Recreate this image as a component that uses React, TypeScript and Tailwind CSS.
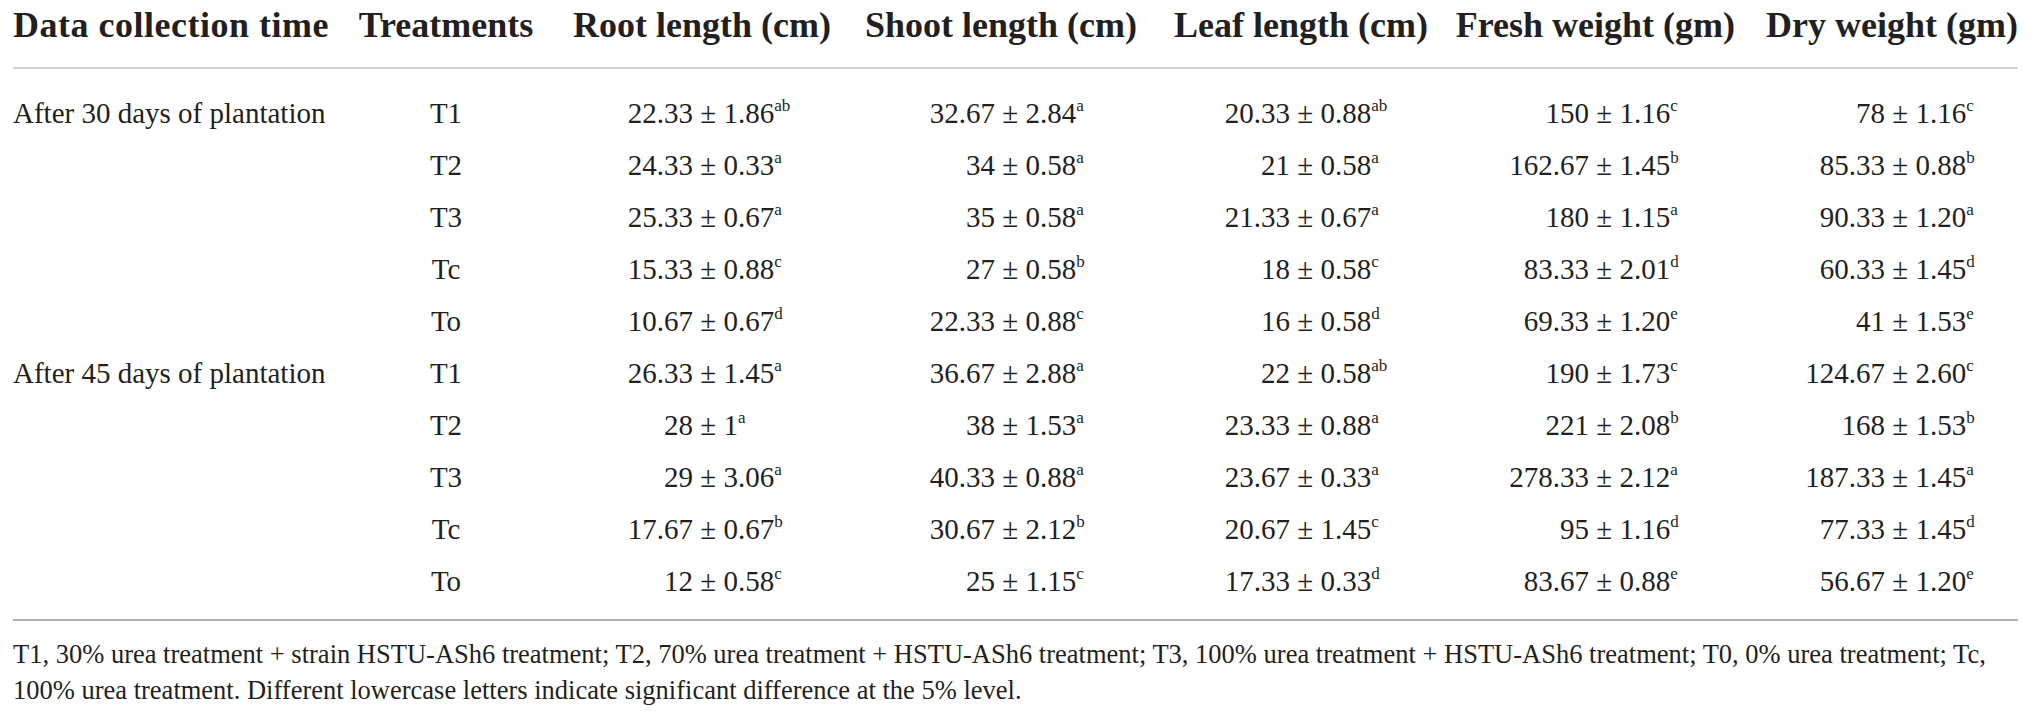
const groups = [
  {
    label: "After 30 days of plantation",
    rows: [
      ["T1", ["22.33", "1.86", "ab"], ["32.67", "2.84", "a"], ["20.33", "0.88", "ab"], ["150", "1.16", "c"], ["78", "1.16", "c"]],
      ["T2", ["24.33", "0.33", "a"], ["34", "0.58", "a"], ["21", "0.58", "a"], ["162.67", "1.45", "b"], ["85.33", "0.88", "b"]],
      ["T3", ["25.33", "0.67", "a"], ["35", "0.58", "a"], ["21.33", "0.67", "a"], ["180", "1.15", "a"], ["90.33", "1.20", "a"]],
      ["Tc", ["15.33", "0.88", "c"], ["27", "0.58", "b"], ["18", "0.58", "c"], ["83.33", "2.01", "d"], ["60.33", "1.45", "d"]],
      ["To", ["10.67", "0.67", "d"], ["22.33", "0.88", "c"], ["16", "0.58", "d"], ["69.33", "1.20", "e"], ["41", "1.53", "e"]],
    ],
  },
  {
    label: "After 45 days of plantation",
    rows: [
      ["T1", ["26.33", "1.45", "a"], ["36.67", "2.88", "a"], ["22", "0.58", "ab"], ["190", "1.73", "c"], ["124.67", "2.60", "c"]],
      ["T2", ["28", "1", "a"], ["38", "1.53", "a"], ["23.33", "0.88", "a"], ["221", "2.08", "b"], ["168", "1.53", "b"]],
      ["T3", ["29", "3.06", "a"], ["40.33", "0.88", "a"], ["23.67", "0.33", "a"], ["278.33", "2.12", "a"], ["187.33", "1.45", "a"]],
      ["Tc", ["17.67", "0.67", "b"], ["30.67", "2.12", "b"], ["20.67", "1.45", "c"], ["95", "1.16", "d"], ["77.33", "1.45", "d"]],
      ["To", ["12", "0.58", "c"], ["25", "1.15", "c"], ["17.33", "0.33", "d"], ["83.67", "0.88", "e"], ["56.67", "1.20", "e"]],
    ],
  },
] as const;

const headers = ["Root length (cm)", "Shoot length (cm)", "Leaf length (cm)", "Fresh weight (gm)", "Dry weight (gm)"];

// values line up on the ± sign; first track = room for the mean
const alignCols = [
  "grid-cols-[158px_1fr]",
  "grid-cols-[164px_1fr]",
  "grid-cols-[153px_1fr]",
  "grid-cols-[161px_1fr]",
  "grid-cols-[150px_1fr]",
];

const grid = "grid grid-cols-[344px_178px_296px_306px_291px_307px_283px]";

function Value({ v, cols }: { v: readonly [string, string, string]; cols: string }) {
  return (
    <div className={`grid ${cols} whitespace-nowrap`}>
      <span className="text-right">{v[0]}</span>
      <span>
        {"\u00a0±\u00a0"}
        {v[1]}
        <sup className="text-[17px] top-[-12px]">{v[2]}</sup>
      </span>
    </div>
  );
}

export default function App() {
  return (
    <div
      className="w-[2031px] h-[716px] bg-white px-[13px] text-[#231f20]"
      style={{ fontFamily: '"Liberation Serif", "Times New Roman", serif' }}
    >
      <div className={`${grid} pt-[3px] pb-[20px] border-b-2 border-[#d2d2d2] text-[36px] leading-[44px] font-bold whitespace-nowrap`}>
        <div className="tracking-[0.5px]">Data collection time</div>
        <div className="text-center">Treatments</div>
        {headers.map((h) => (
          <div key={h} className="text-right">
            {h}
          </div>
        ))}
      </div>

      <div className="pt-[18px] pb-[12px] border-b-2 border-[#b0b0b0] text-[29px] leading-[52px]">
        {groups.map((g) =>
          g.rows.map((r, i) => (
            <div key={g.label + r[0]} className={`${grid} h-[52px]`}>
              <div className="whitespace-nowrap">{i === 0 ? g.label : ""}</div>
              <div className="text-center">{r[0]}</div>
              {r.slice(1).map((v, j) => (
                <Value key={j} v={v as readonly [string, string, string]} cols={alignCols[j]} />
              ))}
            </div>
          ))
        )}
      </div>

      <p className="pt-[15px] text-[26.5px] leading-[36px] whitespace-nowrap">
        T1, 30% urea treatment + strain HSTU-ASh6 treatment; T2, 70% urea treatment + HSTU-ASh6 treatment; T3, 100% urea
        treatment + HSTU-ASh6 treatment; T0, 0% urea treatment; Tc,
        <br />
        100% urea treatment. Different lowercase letters indicate significant difference at the 5% level.
      </p>
    </div>
  );
}
